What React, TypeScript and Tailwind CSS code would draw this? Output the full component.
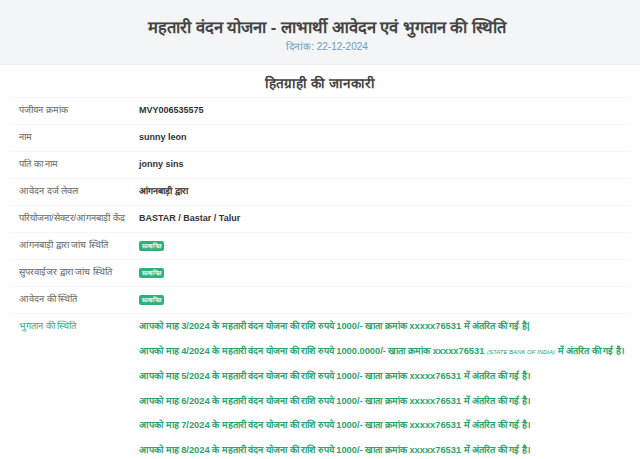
export default function App() {
  const rows: [string, React.ReactNode][] = [
    ["पंजीयन क्रमांक", "MVY006535575"],
    ["नाम", "sunny leon"],
    ["पति का नाम", "jonny sins"],
    ["आवेदन दर्ज लेवल", "आंगनबाड़ी द्वारा"],
    ["परियोजना/सेक्टर/आंगनबाड़ी केंद्र", "BASTAR / Bastar / Talur"],
  ];
  const checks = ["आंगनबाड़ी द्वारा जांच स्थिति", "सुपरवाईजर द्वारा जांच स्थिति", "आवेदन की स्थिति"];
  const months = [5, 6, 7, 8];

  return (
    <div className="min-h-screen bg-white font-['Liberation_Sans',sans-serif]">
      <div className="bg-[#f4f5f6] border-b border-[#efefef] h-[65px] flex flex-col items-center pt-[15px] pl-[14px]">
        <h1 className="text-[16.5px] leading-[24px] font-bold text-[#444]">
          महतारी वंदन योजना - लाभार्थी आवेदन एवं भुगतान की स्थिति
        </h1>
        <div className="text-[10px] leading-[14px] mt-[1px] text-[#6b9bc4]">दिनांक: 22-12-2024</div>
      </div>

      <div className="px-[10px]">
        <h2 className="text-center text-[13.5px] leading-[20px] font-semibold text-[#444] pt-[9px] pb-[3px]">
          हितग्राही की जानकारी
        </h2>
        <div>
          {rows.map(([k, v]) => (
            <div key={k} className="flex h-[27px] items-center border-t border-[#f7f7f7]">
              <div className="w-[129px] pl-[9px] text-[9.3px] text-[#666]">{k}</div>
              <div className="text-[9px] font-bold text-[#333]">{v}</div>
            </div>
          ))}
          {checks.map((k) => (
            <div key={k} className="flex h-[27px] items-center border-t border-[#f7f7f7]">
              <div className="w-[129px] pl-[9px] text-[9.3px] text-[#666]">{k}</div>
              <span className="bg-[#2fb27a] text-white text-[6px] leading-[10px] px-[3px] rounded-[2px] font-bold">
                सत्यापित
              </span>
            </div>
          ))}
          <div className="flex border-t border-[#f7f7f7] pt-[6px]">
            <div className="w-[129px] pl-[9px] text-[9.3px] leading-[13px] text-[#3aaa78]">भुगतान की स्थिति</div>
            <div className="flex flex-col gap-[11.5px] text-[9.3px] leading-[13px] font-bold text-[#2ea56e]">
              <div>आपको माह 3/2024 के महतारी वंदन योजना की राशि रुपये 1000/- खाता क्रमांक xxxxx76531 में अंतरित की गई है|</div>
              <div>
                आपको माह 4/2024 के महतारी वंदन योजना की राशि रुपये 1000.0000/- खाता क्रमांक xxxxx76531{" "}
                <i className="text-[6px] font-normal">(STATE BANK OF INDIA)</i> में अंतरित की गई है।
              </div>
              {months.map((m) => (
                <div key={m}>
                  आपको माह {m}/2024 के महतारी वंदन योजना की राशि रुपये 1000/- खाता क्रमांक xxxxx76531 में अंतरित की गई है।
                </div>
              ))}
            </div>
          </div>
        </div>
      </div>
    </div>
  );
}
